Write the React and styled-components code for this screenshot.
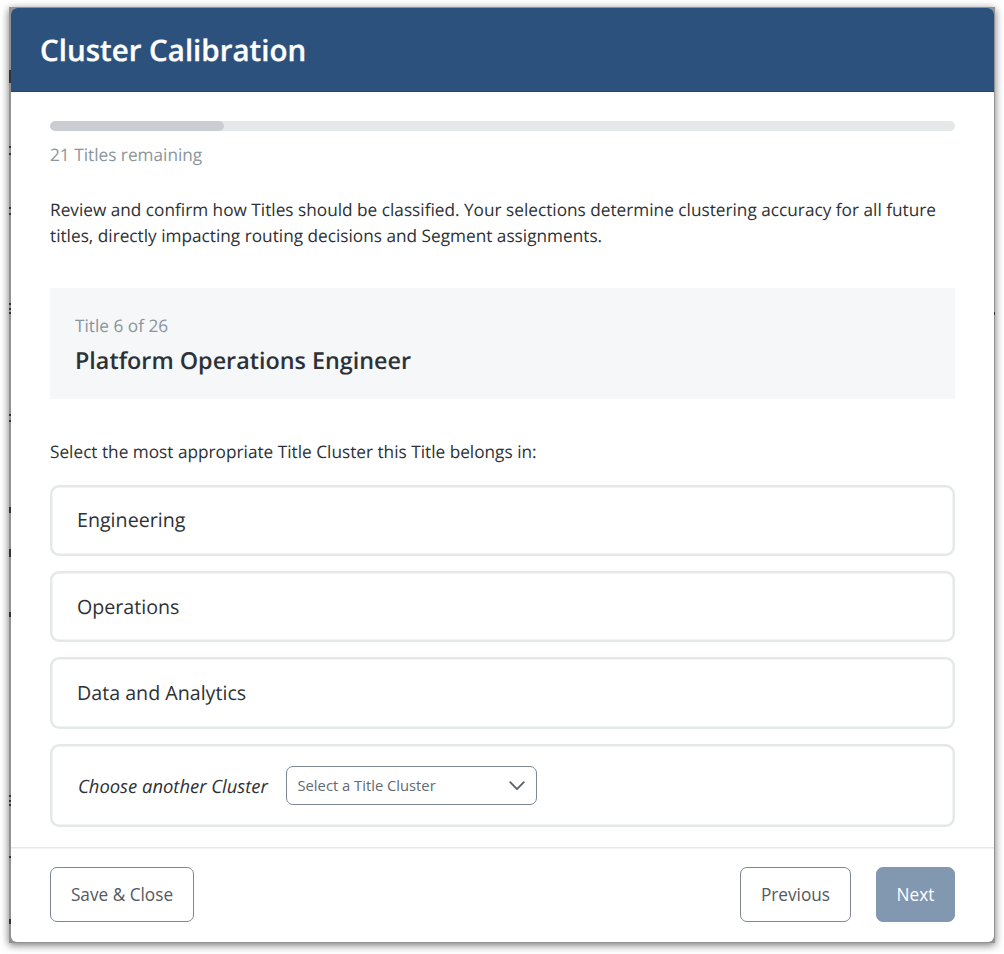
import React, { useState } from "react";
import styled, { createGlobalStyle } from "styled-components";

const GlobalStyle = createGlobalStyle`
  * {
    box-sizing: border-box;
  }

  body {
    margin: 0;
    background: #fff;
    font-family: "Open Sans", "Noto Sans", sans-serif;
    color: #2d3135;
    text-rendering: geometricPrecision;
  }
`;

const Page = styled.div`
  height: 954px;
  padding: 7px 9px 11px 9px;
  overflow: hidden;
`;

// Dimmed page that peeks out around the modal
const Backdrop = styled.div`
  position: relative;
  width: 986px;
  height: 936px;
  padding: 1px 1px 1px 2px;
  background: #929292;
  box-shadow: 0 2px 8px rgba(0, 0, 0, 0.55);
`;

const Speck = styled.i`
  position: absolute;
  left: ${({ $right }) => ($right ? "985px" : "0")};
  top: ${({ $top }) => $top}px;
  width: ${({ $right }) => ($right ? 1 : 2)}px;
  height: ${({ $height }) => $height}px;
  background: #333;
`;

const Modal = styled.div`
  display: flex;
  flex-direction: column;
  height: 934px;
  border-radius: 6px;
  background: #fff;
  overflow: hidden;
`;

const Header = styled.header`
  display: flex;
  align-items: center;
  height: 84px;
  padding: 0 29px;
  background: #2c517c;
  border-bottom: 1px solid #25466c;
`;

const Heading = styled.h1`
  margin: 0;
  font-size: 29.5px;
  font-weight: 600;
  line-height: 40px;
  color: #fff;
  -webkit-text-stroke: 0.3px #fff;
`;

const Body = styled.main`
  flex: 1;
  padding: 29px 39px 0;
`;

const ProgressTrack = styled.div`
  height: 10px;
  border-radius: 5px;
  background: #e4e8e9;
  overflow: hidden;
`;

const ProgressFill = styled.div`
  height: 100%;
  border-radius: 5px;
  background: #cacdd1;
`;

const Remaining = styled.div`
  margin-top: 12px;
  font-size: 17.23px;
  line-height: 26px;
  color: #8b959c;
`;

const Text = styled.p`
  margin: ${({ $margin }) => $margin};
  font-size: 17.23px;
  line-height: 26px;
`;

const TitleCard = styled.section`
  height: 111px;
  padding: 26px 25px 0;
  background: #f5f7f9;
`;

const TitleCount = styled.div`
  font-size: 17.23px;
  line-height: 26px;
  color: #8b959c;
`;

const TitleName = styled.h2`
  margin: 2px 0 0;
  font-size: 23.35px;
  font-weight: 600;
  line-height: 36px;
`;

const OptionList = styled.div`
  display: grid;
  gap: 15.1px;
`;

const Option = styled.div`
  display: flex;
  align-items: center;
  height: ${({ $tall }) => ($tall ? 83.6 : 71.3)}px;
  padding: 0 27px ${({ $tall }) => ($tall ? 0 : 0.4)}px;
  border-radius: 9px;
  box-shadow: inset 0 0 0 2.5px #e4e8e9;
  font-size: 19.65px;
  cursor: pointer;
`;

const OtherLabel = styled.span`
  width: 209px;
  padding: 2px 0 0 1px;
  font-size: 18.4px;
  font-style: italic;
  white-space: nowrap;
`;

const Select = styled.button`
  display: flex;
  align-items: center;
  justify-content: space-between;
  width: 251px;
  height: 39px;
  padding: 0 11px 0 10.5px;
  border: 1px solid #7d8892;
  border-radius: 7px;
  background: #fff;
  font-family: inherit;
  font-size: 14.75px;
  color: #606b74;

  svg {
    margin-top: 1px;
  }
`;

const Footer = styled.footer`
  display: flex;
  gap: 25px;
  height: 95px;
  padding: 20px 39px 0;
  box-shadow: inset 0 1.5px 0 #e4e8e9;
`;

const Button = styled.button`
  width: ${({ $width }) => $width}px;
  height: 55px;
  padding: 0;
  border: 1px solid ${({ $primary }) => ($primary ? "#8297b0" : "#7d8892")};
  border-radius: 7px;
  background: ${({ $primary }) => ($primary ? "#8297b0" : "#fff")};
  font-family: inherit;
  font-size: 17.23px;
  color: ${({ $primary }) => ($primary ? "#fff" : "#53595f")};
  cursor: pointer;

  &:first-child {
    margin-right: auto;
  }
`;

const Chevron = () => (
  <svg width="16" height="10" viewBox="0 0 16 10" fill="none">
    <path
      d="M1.2 1.2 8 8.2l6.8-7"
      stroke="#57626b"
      strokeWidth="1.8"
      strokeLinecap="round"
      strokeLinejoin="round"
    />
  </svg>
);

const clusters = ["Engineering", "Operations", "Data and Analytics"];

const specks = [
  { top: 63, height: 13 },
  { top: 139, height: 2 },
  { top: 146, height: 2 },
  { top: 200, height: 2 },
  { top: 206, height: 2 },
  { top: 296, height: 2 },
  { top: 301, height: 2 },
  { top: 305, height: 2 },
  { top: 407, height: 2 },
  { top: 413, height: 2 },
  { top: 500, height: 6 },
  { top: 542, height: 8 },
  { top: 605, height: 5 },
  { top: 788, height: 2 },
  { top: 793, height: 2 },
  { top: 797, height: 2 },
  { top: 849, height: 2 },
  { top: 912, height: 5 },
  { top: 305, height: 3, right: true },
];

const App = () => {
  const [current] = useState(6);
  const total = 26;
  const done = current - 1;

  return (
    <>
      <GlobalStyle />
      <Page>
        <Backdrop>
          {specks.map((speck, index) => (
            <Speck
              key={index}
              $top={speck.top}
              $height={speck.height}
              $right={speck.right}
            />
          ))}
          <Modal>
            <Header>
              <Heading>Cluster Calibration</Heading>
            </Header>
            <Body>
              <ProgressTrack>
                <ProgressFill style={{ width: `${(done / total) * 100}%` }} />
              </ProgressTrack>
              <Remaining>{total - done} Titles remaining</Remaining>
              <Text $margin="29px 0 38px">
                Review and confirm how Titles should be classified. Your
                selections determine clustering accuracy for all future titles,
                directly impacting routing decisions and Segment assignments.
              </Text>
              <TitleCard>
                <TitleCount>
                  Title {current} of {total}
                </TitleCount>
                <TitleName>Platform Operations Engineer</TitleName>
              </TitleCard>
              <Text $margin="41px 0 18.5px">
                Select the most appropriate Title Cluster this Title belongs in:
              </Text>
              <OptionList>
                {clusters.map((cluster) => (
                  <Option key={cluster}>{cluster}</Option>
                ))}
                <Option $tall>
                  <OtherLabel>Choose another Cluster</OtherLabel>
                  <Select>
                    Select a Title Cluster
                    <Chevron />
                  </Select>
                </Option>
              </OptionList>
            </Body>
            <Footer>
              <Button $width={144}>Save &amp; Close</Button>
              <Button $width={111}>Previous</Button>
              <Button $width={79} $primary>
                Next
              </Button>
            </Footer>
          </Modal>
        </Backdrop>
      </Page>
    </>
  );
};

export default App;
